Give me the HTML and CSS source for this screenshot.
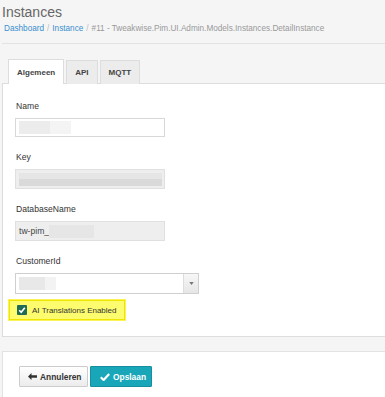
FILE: index.html
```html
<!DOCTYPE html>
<html>
<head>
<meta charset="utf-8">
<link rel="stylesheet" href="styles.css">
</head>
<body>
<div class="page">
  <h1 class="title">Instances</h1>
  <div class="crumbs">
    <a class="crumb">Dashboard</a><span class="sep">/</span><a class="crumb">Instance</a><span class="sep">/</span><span class="cur">#11 - Tweakwise.Pim.UI.Admin.Models.Instances.DetailInstance</span>
  </div>
  <div class="rule"></div>
  <div class="tabs">
    <div class="tab active">Algemeen</div>
    <div class="tab">API</div>
    <div class="tab">MQTT</div>
  </div>
  <div class="panel">
    <div class="field">
      <div class="label">Name</div>
      <div class="input"><span class="blur b-name"></span></div>
    </div>
    <div class="field">
      <div class="label">Key</div>
      <div class="input disabled"><span class="blur b-key"></span></div>
    </div>
    <div class="field">
      <div class="label">DatabaseName</div>
      <div class="input disabled"><span class="val">tw-pim_</span><span class="blur b-db"></span></div>
    </div>
    <div class="field last">
      <div class="label">CustomerId</div>
      <div class="select"><span class="blur b-cust"></span><span class="arrow"><svg width="5" height="3" viewBox="0 0 6 4"><path d="M0 0H6L3 4Z" fill="#777"/></svg></span></div>
    </div>
    <div class="check-row">
      <span class="box"><svg width="8" height="8" viewBox="0 0 8 8"><path d="M1.2 4.2L3.2 6.2L6.8 1.8" stroke="#fff" stroke-width="1.6" fill="none"/></svg></span>
      <span class="check-label">AI Translations Enabled</span>
    </div>
  </div>
  <div class="actions">
    <button class="btn btn-default"><svg width="9" height="7" viewBox="0 0 9 7"><path d="M0 3.5L3.5 0V2.3H9V4.7H3.5V7Z" fill="#333"/></svg>Annuleren</button>
    <button class="btn btn-primary"><svg width="10" height="8" viewBox="0 0 10 8"><path d="M0.8 4.3L3.6 7L9.2 1" stroke="#fff" stroke-width="2.2" fill="none"/></svg>Opslaan</button>
  </div>
</div>
</body>
</html>
```
FILE: styles.css
```css
* { box-sizing: border-box; }
html, body { margin: 0; padding: 0; }
body {
  background: #f5f5f5;
  font-family: "Liberation Sans", Arial, sans-serif;
  color: #333;
  width: 385px;
  height: 397px;
  overflow: hidden;
}
.page { padding-left: 2px; }
.title {
  margin: 0;
  padding-top: 4px;
  font-size: 14px;
  font-weight: normal;
  color: #666;
  line-height: 16px;
  height: 22px;
}
.crumbs {
  font-size: 8.2px;
  line-height: 14px;
  padding-left: 2px;
  color: #999;
  height: 21px;
  white-space: nowrap;
}
.crumb { color: #3a8fd0; }
.sep { color: #bbb; margin: 0 3px; }
.cur { color: #999; }
.rule {
  height: 1px;
  background: #e3e3e3;
  margin-bottom: 15px;
}
.tabs {
  display: flex;
  padding-left: 6px;
  gap: 2px;
  height: 25px;
  margin-bottom: -1px;
  position: relative;
}
.tab {
  font-size: 8px;
  font-weight: bold;
  color: #444;
  background: #ececec;
  border: 1px solid #ddd;
  border-bottom: none;
  padding: 0 8px;
  line-height: 24px;
  height: 24px;
  margin-top: 1px;
}
.tab.active {
  background: #fff;
  height: 25px;
  margin-top: 0;
  line-height: 25px;
  padding: 0 8px;
}
.panel {
  background: #fff;
  border: 1px solid #ddd;
  border-right: none;
  padding: 16px 0 16px 12px;
}
.field { margin-bottom: 14px; }
.field.last { margin-bottom: 6px; }
.label {
  font-size: 8.6px;
  color: #333;
  line-height: 12px;
  margin-bottom: 6px;
  padding-left: 1px;
}
.input {
  width: 150px;
  height: 19px;
  border: 1px solid #d8d8d8;
  background: #fff;
  display: flex;
  align-items: center;
  padding-left: 3px;
  font-size: 8.6px;
}
.input.disabled { background: #eee; border-color: #e0e0e0; height: 20px; }
.val { color: #444; }
.blur { display: inline-block; height: 13px; }
.b-name { width: 52px; background: linear-gradient(90deg, #ececec 0 60%, #f4f4f4 60% 100%); }
.b-key {
  width: 143px;
  background: linear-gradient(180deg, #e4e4e4 0 45%, #d6d6d6 45% 100%);
  opacity: 0.85;
}
.b-db { width: 45px; background: #e6e6e6; }
.b-cust { width: 37px; background: linear-gradient(90deg, #e8e8e8 0 70%, #f3f3f3 70% 100%); }
.select {
  width: 184px;
  height: 21px;
  border: 1px solid #cfcfcf;
  background: #fff;
  display: flex;
  align-items: center;
  padding-left: 3px;
}
.select .arrow {
  margin-left: auto;
  width: 15px;
  height: 100%;
  border-left: 1px solid #ddd;
  background: linear-gradient(#f7f7f7, #e6e6e6);
  display: flex;
  align-items: center;
  justify-content: center;
}
.check-row {
  display: flex;
  align-items: center;
  margin-left: -6px;
  width: 116px;
  height: 20px;
  background: #fdfb6e;
  border: 1px solid #f0e500;
  box-shadow: 0 0 0 1px #fbf35a;
  padding-left: 7px;
  gap: 5px;
}
.box {
  width: 10px;
  height: 10px;
  background: #1e6b57;
  border-radius: 1px;
  display: flex;
  align-items: center;
  justify-content: center;
}
.check-label { font-size: 8px; color: #333; }
.actions {
  margin-top: 14px;
  background: #fff;
  border: 1px solid #e2e2e2;
  border-right: none;
  height: 60px;
  padding: 14px 0 0 16px;
  display: flex;
  gap: 2px;
  align-items: flex-start;
}
.btn {
  font-family: "Liberation Sans", Arial, sans-serif;
  font-size: 8.4px;
  font-weight: bold;
  height: 21px;
  display: flex;
  align-items: center;
  gap: 3px;
  border-radius: 1px;
  cursor: pointer;
}
.btn-default {
  width: 69px;
  background: linear-gradient(#fff, #ececec);
  border: 1px solid #ccc;
  color: #333;
  padding: 0 0 0 8px;
}
.btn-primary {
  width: 62px;
  background: #1aa6b9;
  border: 1px solid #158e9f;
  color: #fff;
  padding: 0 0 0 9px;
}
```
